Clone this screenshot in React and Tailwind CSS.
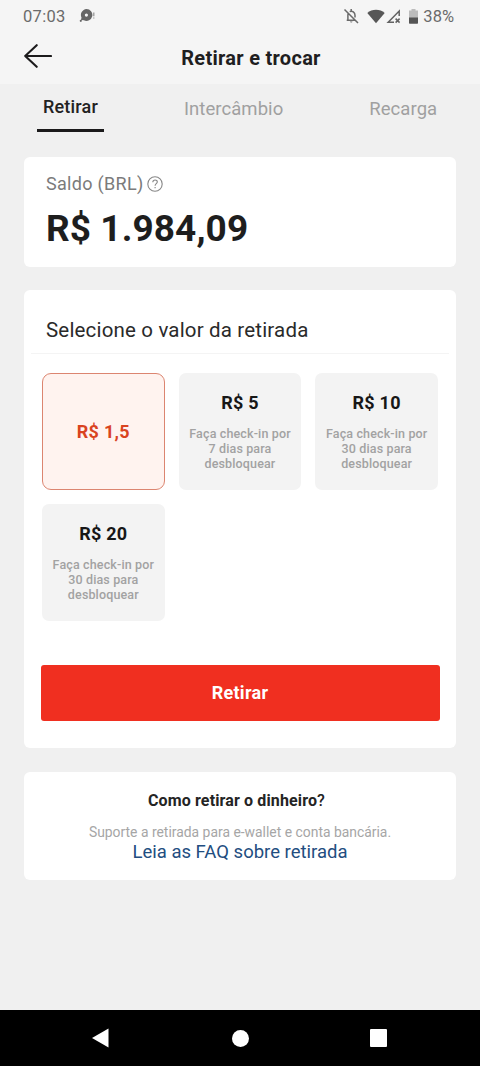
const options = [
  { amount: 'R$ 1,5', selected: true },
  { amount: 'R$ 5', days: 7 },
  { amount: 'R$ 10', days: 30 },
  { amount: 'R$ 20', days: 30 },
];

function StatusBar() {
  return (
    <div className="flex h-8 items-center justify-between pl-[23px] pr-[26px] text-[#6b6b6b]">
      <div className="flex items-center gap-[13px]">
        <span className="pt-0.5 text-[16.5px] leading-none tracking-[0.3px]">07:03</span>
        <svg className="h-4 w-4" viewBox="0 0 16 16" fill="#666">
          <path fillRule="evenodd" d="M7.4 1.1a5.9 5.9 0 1 1-2.5 11.2L2 12l.5-2.4A5.9 5.9 0 0 1 7.4 1.1Zm0 4.4a1.6 1.6 0 1 0 0 3.2a1.6 1.6 0 0 0 0-3.2Z" />
          <circle cx="1.8" cy="12.8" r="1.1" />
          <path d="M14.2 4.6h1.2v3.6h-1.2ZM14.2 9.4h1.2v1h-1.2Z" opacity="0.7" />
        </svg>
      </div>
      <div className="flex items-center">
        <svg className="mr-[8px] h-4 w-4" viewBox="0 0 16 16" fill="none" stroke="#6a6a6a" strokeWidth="1.5">
          <path d="M1.5 1.5 15 15M3.7 12.3h8.2M4.9 11.9V7.3c0-1 .2-1.8.7-2.5M6.7 3.6c2.6-1 5.3.8 5.3 3.7v2.2M8.2 1v2" />
          <path d="M6.9 13.5h2.7a1.4 1.4 0 0 1-2.7 0Z" fill="#6a6a6a" stroke="none" />
        </svg>
        <svg className="h-[15px] w-[18px]" viewBox="0 0 18 15" fill="#575757">
          <path d="M.3 4C5-.4 13-.4 17.7 4L9 14.2Z" />
        </svg>
        <svg className="ml-px mr-[8px] h-[15px] w-[15px]" viewBox="0 0 15 15" fill="none" stroke="#626262" strokeWidth="1.5">
          <path d="M13.2 7V2L2.2 13.3H8M9.6 9.6l4 4M13.6 9.6l-4 4" />
        </svg>
        <svg className="mr-[5px] h-[15px] w-[9px]" viewBox="0 0 9 15">
          <path d="M2.5 0h4v1.5H9V9H0V1.5h2.5Z" fill="#bcbcbc" />
          <path d="M0 8.5h9V14a.7.7 0 0 1-.7.7H.7A.7.7 0 0 1 0 14Z" fill="#555" />
        </svg>
        <span className="pt-0.5 text-[16.5px] leading-none">38%</span>
      </div>
    </div>
  );
}

function Header() {
  return (
    <header className="h-[84px] bg-[#f5f5f5]">
      <StatusBar />
      <div className="grid h-[52px] grid-cols-[80px_1fr_80px] items-center">
        <svg className="mb-[5px] ml-6 h-6 w-7" viewBox="0 0 28 24" fill="none" stroke="#1c1b1c" strokeWidth="2.1" strokeLinecap="round" strokeLinejoin="round">
          <path d="M27 12H1.2M12.7 1.2 1.2 12 12.7 22.8" />
        </svg>
        <h1 className="ml-[22px] text-center text-xl leading-6 font-bold tracking-[0.28px] text-[#1f1e1f]">Retirar e trocar</h1>
      </div>
    </header>
  );
}

function Tabs() {
  return (
    <nav className="flex h-[73px] items-start pl-[37px] text-[18.5px] leading-6 tracking-[0.06px] text-[#a0a0a0]">
      <div className="flex w-[67px] flex-col items-center text-[#222]">
        <span className="mt-[11px] text-[18px] leading-6 font-medium tracking-[0.2px]">Retirar</span>
        <span className="mt-[10px] h-[3px] w-full bg-[#1b1a1b]" />
      </div>
      <span className="mt-[13px] ml-20">Intercâmbio</span>
      <span className="mt-[13px] ml-[86px]">Recarga</span>
    </nav>
  );
}

function Option({ amount, days, selected }) {
  if (selected) {
    return (
      <button className="flex h-[117px] items-center justify-center rounded-[9px] border border-[#dc8570] bg-[#fff3ef] text-[18px] font-bold tracking-[0.3px] text-[#d9431f]">
        {amount}
      </button>
    );
  }
  return (
    <button className="flex h-[117px] flex-col items-center rounded-[7px] bg-[#f3f3f3] pt-[18px]">
      <span className="text-[18px] leading-6 font-bold tracking-[0.25px] text-[#171717]">{amount}</span>
      <span className="mt-[11px] text-[12.5px] leading-[15px] font-medium tracking-[0.14px] text-[#a2a2a2]">
        Faça check-in por<br />{days} dias para<br />desbloquear
      </span>
    </button>
  );
}

export default function App() {
  return (
    <div className="flex h-[1066px] w-[480px] flex-col overflow-hidden bg-[#f0f0f0] font-['Roboto',sans-serif]">
      <Header />
      <Tabs />
      <main className="flex flex-1 flex-col px-6">
        <section className="h-[110px] rounded-[6px] bg-white px-[22px] pt-[15px]">
          <div className="flex items-center gap-1 text-[18px] leading-6 text-[#7b7b7b]">
            <span className="tracking-[0.3px]">Saldo (BRL)</span>
            <svg className="h-4 w-4" viewBox="0 0 16 16" fill="none" stroke="#878787" strokeWidth="1.1">
              <circle cx="8" cy="8" r="7.2" />
              <path d="M5.8 6.2c.1-3 4.6-2.8 4.5-.2-.1 1.6-2.2 1.7-2.2 3.7M8.1 11v1.3" />
            </svg>
          </div>
          <p className="mt-[11px] text-[37px] leading-[44px] font-bold tracking-[0.08px] text-[#1e1e1e]">R$ 1.984,09</p>
        </section>

        <section className="mt-[23px] h-[458px] rounded-[6px] bg-white px-[7px]">
          <h2 className="h-16 border-b border-[#f4f4f4] pt-[26px] pl-[15px] text-[20.5px] leading-7 tracking-[0.17px] text-[#2a2a2a]">
            Selecione o valor da retirada
          </h2>
          <div className="mx-[11px] mt-[19px] grid grid-cols-3 gap-x-[14px] gap-y-[14px]">
            {options.map((option) => (
              <Option key={option.amount} {...option} />
            ))}
          </div>
          <button className="mx-[9.5px] mt-[44px] h-14 w-[399px] rounded-[3px] bg-[#f02f20] pb-0.5 text-[18px] font-bold tracking-[0.3px] text-white">
            Retirar
          </button>
        </section>

        <section className="mt-6 flex h-[108px] flex-col items-center rounded-[6px] bg-white pt-[18px]">
          <h3 className="mr-[7px] text-[16px] leading-[22px] font-bold tracking-[0.13px] text-[#242424]">Como retirar o dinheiro<span className="font-medium">?</span></h3>
          <p className="mt-[11px] text-[13.9px] leading-[18px] text-[#a6a6a6]">Suporte a retirada para e-wallet e conta bancária.</p>
          <a className="text-[18.5px] leading-[22px] text-[#224d80]">Leia as FAQ sobre retirada</a>
        </section>
      </main>
      <footer className="flex h-14 shrink-0 items-center justify-between bg-black pr-[93px] pl-[92px]">
        <svg className="h-5 w-[17px]" viewBox="0 0 17 20" fill="#fff">
          <path d="M16.5.5v19L0 10Z" />
        </svg>
        <span className="ml-px h-[17px] w-[17px] rounded-full bg-white" />
        <span className="h-[18px] w-[17px] rounded-[1px] bg-white" />
      </footer>
    </div>
  );
}
